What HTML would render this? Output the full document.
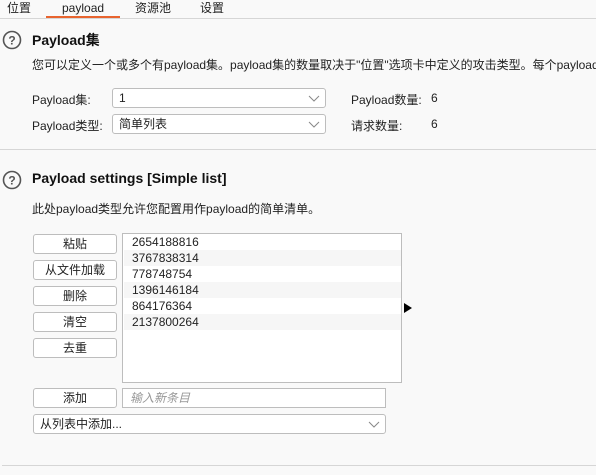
<!DOCTYPE html>
<html><head><meta charset="utf-8"><style>
*{margin:0;padding:0;box-sizing:border-box}
body{width:596px;height:475px;background:#f9f9f9;font-family:"Liberation Sans","Noto Sans CJK SC",sans-serif;font-size:12px;color:#222;position:relative;overflow:hidden}
.a{position:absolute;white-space:nowrap}
.t{font-size:14px;font-weight:bold;color:#111}
.sel{position:absolute;background:#fff;border:1px solid #bdbdbd;border-radius:3px;height:20px;line-height:18px;padding-left:6px}
.sel svg{position:absolute;right:5px;top:6px}
.btn{position:absolute;left:33px;width:84px;height:20px;background:#fff;border:1px solid #bdbdbd;border-radius:3px;text-align:center;line-height:18px}
.hl{position:absolute;height:1px;background:#d6d6d6}
.row{position:absolute;left:1px;width:277px;height:16px;line-height:16px;padding-left:8px}
</style></head><body>
<div class="a" style="left:7px;top:0;line-height:16px">位置</div>
<div class="a" style="left:62px;top:0;line-height:16px">payload</div>
<div class="a" style="left:135px;top:0;line-height:16px">资源池</div>
<div class="a" style="left:200px;top:0;line-height:16px">设置</div>
<div class="a" style="left:46px;top:16px;width:74px;height:2px;background:#e8642f"></div>
<div class="hl" style="left:0;top:18px;width:596px"></div>

<svg class="a" style="left:2px;top:30px" width="20" height="20"><circle cx="10" cy="10" r="8.5" fill="none" stroke="#555" stroke-width="1.6"/><text x="10" y="14.5" font-size="12" font-weight="bold" text-anchor="middle" fill="#555" font-family="Liberation Sans">?</text></svg>
<div class="a t" style="left:32px;top:30px">Payload集</div>
<div class="a" style="left:32px;top:56px;width:564px;overflow:hidden">您可以定义一个或多个有payload集。payload集的数量取决于"位置"选项卡中定义的攻击类型。每个payload集可以</div>
<div class="a" style="left:32px;top:91px">Payload集:</div>
<div class="sel" style="left:112px;top:88px;width:214px">1<svg width="12" height="8"><path d="M1 1l5 5 5-5" fill="none" stroke="#888"/></svg></div>
<div class="a" style="left:32px;top:117px">Payload类型:</div>
<div class="sel" style="left:112px;top:114px;width:214px">简单列表<svg width="12" height="8"><path d="M1 1l5 5 5-5" fill="none" stroke="#888"/></svg></div>
<div class="a" style="left:351px;top:91px">Payload数量:</div><div class="a" style="left:431px;top:91px">6</div>
<div class="a" style="left:351px;top:117px">请求数量:</div><div class="a" style="left:431px;top:117px">6</div>
<div class="hl" style="left:0;top:149px;width:596px"></div>

<svg class="a" style="left:2px;top:170px" width="20" height="20"><circle cx="10" cy="10" r="8.5" fill="none" stroke="#555" stroke-width="1.6"/><text x="10" y="14.5" font-size="12" font-weight="bold" text-anchor="middle" fill="#555" font-family="Liberation Sans">?</text></svg>
<div class="a t" style="left:32px;top:170px">Payload settings [Simple list]</div>
<div class="a" style="left:32px;top:200px">此处payload类型允许您配置用作payload的简单清单。</div>

<div class="btn" style="top:234px">粘贴</div>
<div class="btn" style="top:260px">从文件加载</div>
<div class="btn" style="top:286px">删除</div>
<div class="btn" style="top:312px">清空</div>
<div class="btn" style="top:338px">去重</div>
<div class="a" style="left:122px;top:233px;width:280px;height:150px;background:#fff;border:1px solid #bdbdbd">
<div class="row" style="top:0">2654188816</div>
<div class="row" style="top:16px;background:#f6f6f6">3767838314</div>
<div class="row" style="top:32px">778748754</div>
<div class="row" style="top:48px;background:#f6f6f6">1396146184</div>
<div class="row" style="top:64px">864176364</div>
<div class="row" style="top:80px;background:#f6f6f6">2137800264</div>
</div>
<svg class="a" style="left:404px;top:303px" width="8" height="10"><path d="M0 0L8 5L0 10Z" fill="#000"/></svg>
<div class="btn" style="top:388px">添加</div>
<div class="a" style="left:122px;top:388px;width:264px;height:20px;background:#fff;border:1px solid #bdbdbd;padding-left:7px;line-height:18px;color:#999;font-style:italic">输入新条目</div>
<div class="sel" style="left:33px;top:414px;width:353px">从列表中添加...<svg width="12" height="8"><path d="M1 1l5 5 5-5" fill="none" stroke="#888"/></svg></div>
<div class="hl" style="left:2px;top:465px;width:594px"></div>
</body></html>
